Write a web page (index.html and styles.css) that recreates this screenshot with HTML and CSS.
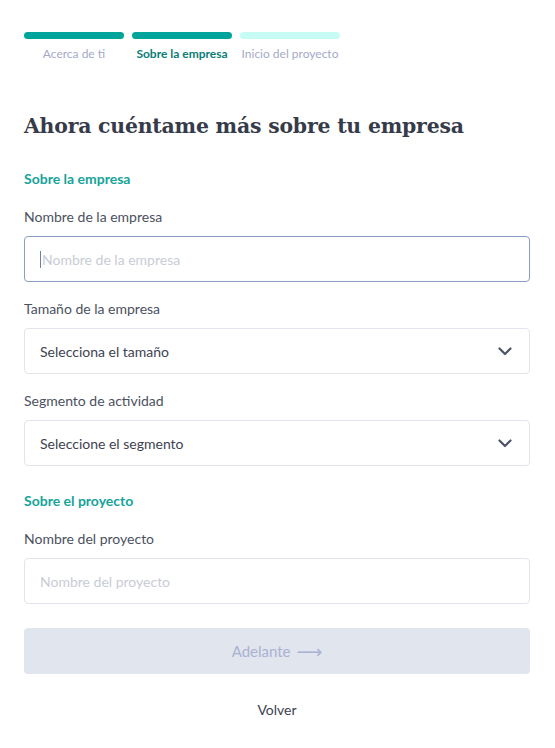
FILE: index.html
```html
<!DOCTYPE html>
<html lang="es">
<head>
<meta charset="utf-8">
<link rel="stylesheet" href="styles.css">
</head>
<body>
<div class="page">
  <div class="steps">
    <div class="step">
      <div class="bar bar-done"></div>
      <div class="step-label">Acerca de ti</div>
    </div>
    <div class="step">
      <div class="bar bar-done"></div>
      <div class="step-label step-active">Sobre la empresa</div>
    </div>
    <div class="step">
      <div class="bar bar-todo"></div>
      <div class="step-label">Inicio del proyecto</div>
    </div>
  </div>

  <h1 class="title">Ahora cuéntame más sobre tu empresa</h1>

  <div class="section-title">Sobre la empresa</div>

  <div class="field">
    <label class="label">Nombre de la empresa</label>
    <div class="input input-focus"><span class="caret"></span><span class="placeholder">Nombre de la empresa</span></div>
  </div>

  <div class="field">
    <label class="label">Tamaño de la empresa</label>
    <div class="input select"><span class="value">Selecciona el tamaño</span>
      <svg class="chev" width="14" height="9" viewBox="0 0 14 9"><path d="M1.5 1.5 L7 7 L12.5 1.5" fill="none" stroke="#4b5366" stroke-width="2.2" stroke-linecap="round" stroke-linejoin="round"/></svg>
    </div>
  </div>

  <div class="field">
    <label class="label">Segmento de actividad</label>
    <div class="input select"><span class="value">Seleccione el segmento</span>
      <svg class="chev" width="14" height="9" viewBox="0 0 14 9"><path d="M1.5 1.5 L7 7 L12.5 1.5" fill="none" stroke="#4b5366" stroke-width="2.2" stroke-linecap="round" stroke-linejoin="round"/></svg>
    </div>
  </div>

  <div class="section-title section-2">Sobre el proyecto</div>

  <div class="field">
    <label class="label">Nombre del proyecto</label>
    <div class="input"><span class="placeholder">Nombre del proyecto</span></div>
  </div>

  <button class="btn">Adelante <span class="arrow">⟶</span></button>

  <div class="back">Volver</div>
</div>
</body>
</html>
```

FILE: styles.css
```css
* { box-sizing: border-box; }
html, body { margin: 0; padding: 0; background: #fff; }
body { font-family: Lato, "Open Sans", sans-serif; color: #3d4250; }
.page { padding: 32px 25px 0 24px; display: flex; flex-direction: column; }

.steps { display: flex; gap: 8px; }
.step { width: 100px; display: flex; flex-direction: column; align-items: center; }
.bar { width: 100%; height: 7px; border-radius: 4px; }
.bar-done { background: #00a49b; }
.bar-todo { background: #c6fcf4; }
.step-label { margin-top: 7px; font-size: 12px; line-height: 15px; color: #a4a9c9; white-space: nowrap; }
.step-active { color: #0b7d77; font-weight: 700; }

.title {
  margin: 50px 0 0 0;
  font-family: "DejaVu Serif", "Liberation Serif", serif;
  font-weight: 700;
  font-size: 20.4px;
  line-height: 30px;
  color: #363b4a;
  letter-spacing: -0.2px;
}

.section-title { margin-top: 29px; margin-bottom: 2px; font-size: 14px; font-weight: 700; color: #16a39a; line-height: 18px; }
.section-2 { margin-top: 26px; }

.field { display: flex; flex-direction: column; }
.label { margin-top: 18px; font-size: 14px; line-height: 18px; color: #4b5160; }
.input {
  margin-top: 10px;
  height: 46px;
  border: 1px solid #e2e5ec;
  border-radius: 4px;
  display: flex;
  align-items: center;
  padding: 0 15px;
  font-size: 14px;
}
.input-focus { border-color: #8b9dc3; }
.caret { width: 1px; height: 17px; background: #6b7fb0; margin-right: 1px; }
.placeholder { color: #c9ccd6; }
.value { color: #3d4250; flex: 1; }
.select { justify-content: space-between; padding-right: 17px; }
.chev { display: block; }

.btn {
  margin-top: 24px;
  height: 46px;
  border: none;
  border-radius: 4px;
  background: #e1e5ed;
  color: #a9b2d2;
  font-family: Lato, sans-serif;
  font-size: 15px;
  display: flex;
  align-items: center;
  justify-content: center;
  gap: 6px;
}
.arrow { font-size: 18px; font-family: "DejaVu Sans", sans-serif; }

.back { margin-top: 27px; text-align: center; font-size: 14px; color: #3d4250; line-height: 18px; }
```
